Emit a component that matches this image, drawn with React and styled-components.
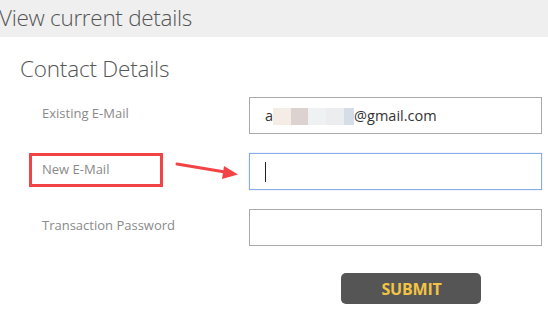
import React from 'react'
import styled, { createGlobalStyle } from 'styled-components'

const GlobalStyle = createGlobalStyle`
  html, body {
    margin: 0;
    padding: 0;
    background: #fff;
  }
  body {
    font-family: "Open Sans", "Liberation Sans", sans-serif;
    color: #555;
  }
`

const Root = styled.div`
  position: relative;
  width: 548px;
  height: 325px;
  overflow: hidden;
`

const TopBar = styled.div`
  height: 37px;
  background: #efefef;
  display: flex;
  align-items: center;
  font-size: 22.5px;
  font-weight: 300;
  color: #555;
  letter-spacing: -0.3px;
  & > span {
    margin-left: -1px;
    margin-top: -3px;
  }
`

const Section = styled.div`
  padding: 17px 0 0 20px;
`

const Title = styled.h2`
  margin: 0;
  font-size: 22.5px;
  font-weight: 300;
  line-height: 30px;
  color: #555;
  letter-spacing: -0.2px;
`

const Form = styled.div`
  display: grid;
  grid-template-columns: 220px 293px;
  row-gap: 19px;
  margin: 13px 0 0 9px;
  align-items: center;
`

const Label = styled.div`
  justify-self: start;
  box-sizing: border-box;
  font-size: 13px;
  color: #8a8a8a;
  padding: 0 10px 2px 10px;
  border: 3px solid ${p => (p.$marked ? '#f24447' : 'transparent')};
  width: ${p => (p.$marked ? '134px' : 'auto')};
  height: 34px;
  display: flex;
  align-items: center;
  margin-top: -4px;
`

const Field = styled.div`
  box-sizing: border-box;
  height: 37px;
  border: 1px solid ${p => (p.$focused ? '#86acea' : '#a9a9a9')};
  box-shadow: ${p => (p.$focused ? '0 0 1px #a8c4f0' : 'none')};
  display: flex;
  align-items: center;
  padding-left: 15px;
  font-size: 14.5px;
  color: #333;
  font-family: "Open Sans", "Liberation Sans", sans-serif;
`

const Blur = styled.span`
  display: inline-block;
  height: 17px;
  margin-top: 2px;
  width: ${p => p.$w}px;
  background: ${p => p.$c};
`

const Caret = styled.span`
  display: inline-block;
  width: 1px;
  height: 20px;
  background: #222;
`

const Actions = styled.div`
  display: flex;
  margin: 27px 0 0 321px;
`

const SubmitButton = styled.button`
  width: 140px;
  height: 31px;
  border: none;
  border-radius: 5px;
  background: #555;
  color: #f2c443;
  font-family: "Open Sans", "Liberation Sans", sans-serif;
  font-weight: 700;
  font-size: 16px;
  letter-spacing: -0.2px;
  padding: 0 0 0 1px;
  cursor: pointer;
`

const Pointer = styled.svg`
  position: absolute;
  left: 170px;
  top: 155px;
  width: 75px;
  height: 28px;
  overflow: visible;
`

const blurBlocks = [
  ['#f6ece6', 18],
  ['#dcd2d0', 17],
  ['#eef2f3', 18],
  ['#ecedef', 18],
  ['#d5dde6', 10]
]

const App = () => (
  <Root>
    <GlobalStyle />
    <TopBar><span>View current details</span></TopBar>
    <Section>
      <Title>Contact Details</Title>
      <Form>
        <Label>Existing E-Mail</Label>
        <Field>
          <span>a</span>
          {blurBlocks.map(([c, w], i) => <Blur key={i} $c={c} $w={w} />)}
          <span>@gmail.com</span>
        </Field>
        <Label $marked>New E-Mail</Label>
        <Field $focused><Caret /></Field>
        <Label>Transaction Password</Label>
        <Field />
      </Form>
      <Actions>
        <SubmitButton>SUBMIT</SubmitButton>
      </Actions>
    </Section>
    <Pointer viewBox='0 0 75 28'>
      <line x1='7' y1='9' x2='58' y2='17.5' stroke='#f24447' strokeWidth='3' strokeLinecap='round' />
      <polygon points='68,19.5 54,11 52,24' fill='#f24447' />
    </Pointer>
  </Root>
)

export default App
